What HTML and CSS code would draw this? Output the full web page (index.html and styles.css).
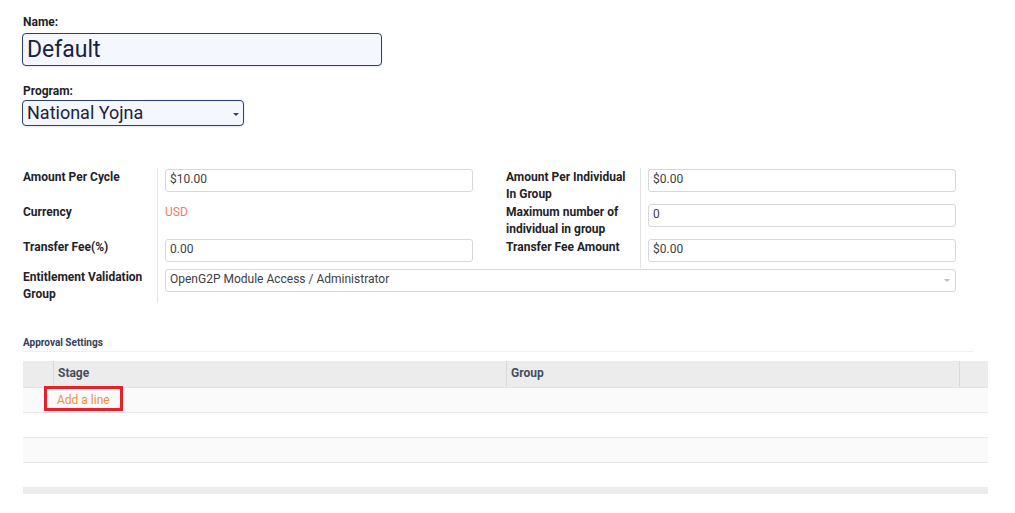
FILE: index.html
```html
<!DOCTYPE html>
<html>
<head>
<meta charset="utf-8">
<link rel="stylesheet" href="styles.css">
</head>
<body>
<div class="sheet">
  <div class="title">
    <div class="top-label">Name:</div>
    <div class="name-input">Default</div>
    <div class="top-label program-label">Program:</div>
    <div class="program-select"><span>National Yojna</span><span class="caret"></span></div>
  </div>

  <div class="fields">
    <div class="lbl">Amount Per Cycle</div>
    <div class="val"><div class="box">$10.00</div></div>
    <div class="lbl">Amount Per Individual<br>In Group</div>
    <div class="val val-right"><div class="box">$0.00</div></div>

    <div class="lbl">Currency</div>
    <div class="val"><span class="link-text">USD</span></div>
    <div class="lbl">Maximum number of<br>individual in group</div>
    <div class="val val-right"><div class="box">0</div></div>

    <div class="lbl">Transfer Fee(%)</div>
    <div class="val"><div class="box">0.00</div></div>
    <div class="lbl">Transfer Fee Amount</div>
    <div class="val val-right"><div class="box">$0.00</div></div>

    <div class="lbl">Entitlement Validation<br>Group</div>
    <div class="val val-wide"><div class="box box-select"><span>OpenG2P Module Access / Administrator</span><span class="caret caret-light"></span></div></div>
  </div>

  <div class="section-title">Approval Settings</div>

  <div class="list">
    <div class="list-head">
      <div class="hc hc-handle"></div>
      <div class="hc hc-main">Stage</div>
      <div class="hc hc-main">Group</div>
      <div class="hc hc-end"></div>
    </div>
    <div class="list-row row-odd first-row">
      <div class="add-cell"><span class="add-link">Add a line</span></div>
      <div class="highlight"></div>
    </div>
    <div class="list-row"></div>
    <div class="list-row row-odd"></div>
    <div class="list-row row-last"></div>
    <div class="list-foot"></div>
  </div>
</div>
</body>
</html>
```

FILE: styles.css
```css
* { box-sizing: border-box; }

body {
  margin: 0;
  background: #ffffff;
  font-family: Roboto, "Liberation Sans", sans-serif;
  color: #212529;
}

.sheet {
  padding: 14px 0 0 22px;
}

.title {
  display: flex;
  flex-direction: column;
  align-items: flex-start;
}

.top-label {
  font-size: 12px;
  font-weight: 700;
  line-height: 16px;
  padding-left: 1px;
  color: #1f2329;
  margin-bottom: 3px;
}

.program-label {
  margin-top: 17px;
  margin-bottom: 1px;
}

.name-input {
  width: 360px;
  height: 33px;
  border: 1px solid #2e3d6c;
  border-radius: 4px;
  background: #f4f7fd;
  font-size: 23px;
  line-height: 31px;
  padding: 0 4px;
  color: #1b2240;
  box-shadow: 0 1px 2px rgba(40, 60, 110, 0.12);
}

.program-select {
  width: 222px;
  height: 26px;
  border: 1px solid #2e3d6c;
  border-radius: 4px;
  background: #f4f7fd;
  font-size: 18px;
  line-height: 24px;
  padding: 0 4px;
  color: #1b2240;
  display: flex;
  align-items: center;
  justify-content: space-between;
  box-shadow: 0 1px 2px rgba(40, 60, 110, 0.12);
}

.caret {
  width: 0;
  height: 0;
  border-left: 3px solid transparent;
  border-right: 3px solid transparent;
  border-top: 3px solid #2e3d6c;
  margin-right: 0;
  margin-top: 2px;
}

.caret-light {
  border-top-color: #b9bcc0;
  margin-right: 2px;
}

.fields {
  margin-top: 42px;
  margin-left: 1px;
  display: grid;
  grid-template-columns: 134px 349px 134px 333px;
  grid-auto-rows: auto;
}

.lbl {
  font-size: 12px;
  font-weight: 700;
  line-height: 17px;
  padding-top: 1px;
  padding-right: 4px;
  color: #1f2329;
  min-height: 30px;
  white-space: nowrap;
}

.val {
  border-left: 1px solid #e2e4e7;
  padding: 1px 0 0 7px;
  padding-right: 33px;
}

.val-right {
  padding-right: 17px;
}

.val-wide {
  grid-column: 2 / 5;
  padding-right: 17px;
  min-height: 35px;
}

.box {
  height: 23px;
  border: 1px solid #d6d8db;
  border-radius: 3px;
  font-size: 12px;
  line-height: 16px;
  padding: 1px 3px 0 4px;
  color: #3d4047;
  background: #fff;
}

.box-select {
  display: flex;
  justify-content: space-between;
  align-items: flex-start;
}

.box-select .caret {
  margin-top: 8px;
}

.link-text {
  display: block;
  font-size: 12px;
  line-height: 17px;
  margin-top: 0;
  color: #ec7f5c;
}

.section-title {
  margin-top: 33px;
  margin-left: 1px;
  width: 950px;
  font-size: 10px;
  font-weight: 700;
  line-height: 14px;
  color: #34405a;
  padding-bottom: 1px;
  border-bottom: 1px solid #eeeff1;
}

.list {
  margin-top: 9px;
  margin-left: 1px;
  width: 965px;
}

.list-head {
  display: flex;
  height: 27px;
  background: #ececec;
  border-bottom: 1px solid #e2e6ec;
}

.hc {
  font-size: 12px;
  font-weight: 700;
  line-height: 16px;
  padding: 4px 4px 0;
  color: #454f5d;
}

.hc-handle { width: 30px; }
.hc-main { width: 453px; border-left: 1px solid #dadada; }
.hc-end { width: 29px; border-left: 1px solid #dadada; }

.list-row {
  height: 25px;
  border-bottom: 1px solid #e6e7e9;
  background: #ffffff;
}

.row-odd { background: #fafafa; }
.row-last { border-bottom: none; height: 24px; }

.first-row {
  position: relative;
}

.add-cell {
  padding: 1px 0 0 34px;
}

.add-link {
  font-size: 12px;
  line-height: 16px;
  color: #ef8f3d;
}

.highlight {
  position: absolute;
  left: 21px;
  top: -2px;
  width: 79px;
  height: 25px;
  border: 3px solid #e8202a;
}

.list-foot {
  height: 7px;
  background: #ececec;
}
```
